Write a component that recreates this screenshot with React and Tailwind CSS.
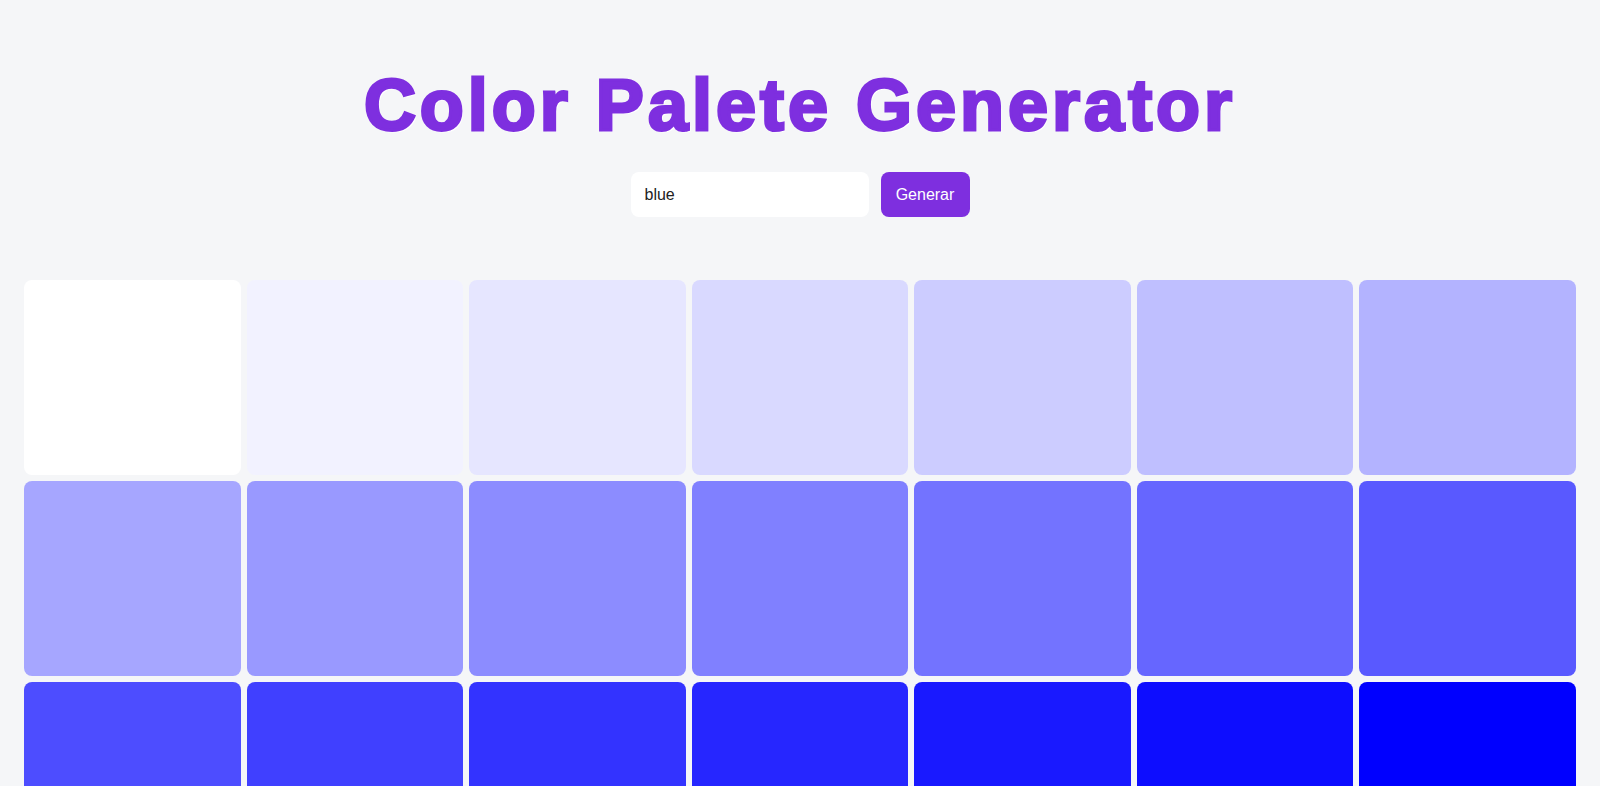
import { useState } from 'react';

// Genera una escala de color desde blanco hasta el color base
function buildPalette() {
  const colors = [];
  for (let i = 0; i < 21; i++) {
    const v = Math.round(255 * (1 - i / 20));
    const hex = v.toString(16).padStart(2, '0');
    colors.push(`#${hex}${hex}ff`);
  }
  return colors;
}

export default function App() {
  const [query, setQuery] = useState('blue');
  const [palette] = useState(buildPalette());

  return (
    <div className="min-h-screen bg-[#f5f6f8] font-['Liberation_Sans',Arial,sans-serif]">
      <h1 className="pt-[62px] text-center text-[72px] leading-[86px] font-black tracking-[4px] text-[#7e2fdf] [-webkit-text-stroke:3px_#7e2fdf] [text-shadow:2px_2px_0_#ffffff]">
        Color Palete Generator
      </h1>

      <div className="mt-[24px] flex justify-center gap-3">
        <input
          value={query}
          onChange={(e) => setQuery(e.target.value)}
          className="h-[45px] w-[238px] rounded-lg bg-white px-[14px] text-base text-[#222] outline-none"
        />
        <button className="h-[45px] w-[89px] rounded-lg bg-[#7e2fdf] text-base text-white">
          Generar
        </button>
      </div>

      <div className="mt-[63px] grid grid-cols-7 gap-[6px] px-6">
        {palette.map((c) => (
          <div key={c} className="h-[195px] rounded-lg" style={{ backgroundColor: c }} />
        ))}
      </div>
    </div>
  );
}
